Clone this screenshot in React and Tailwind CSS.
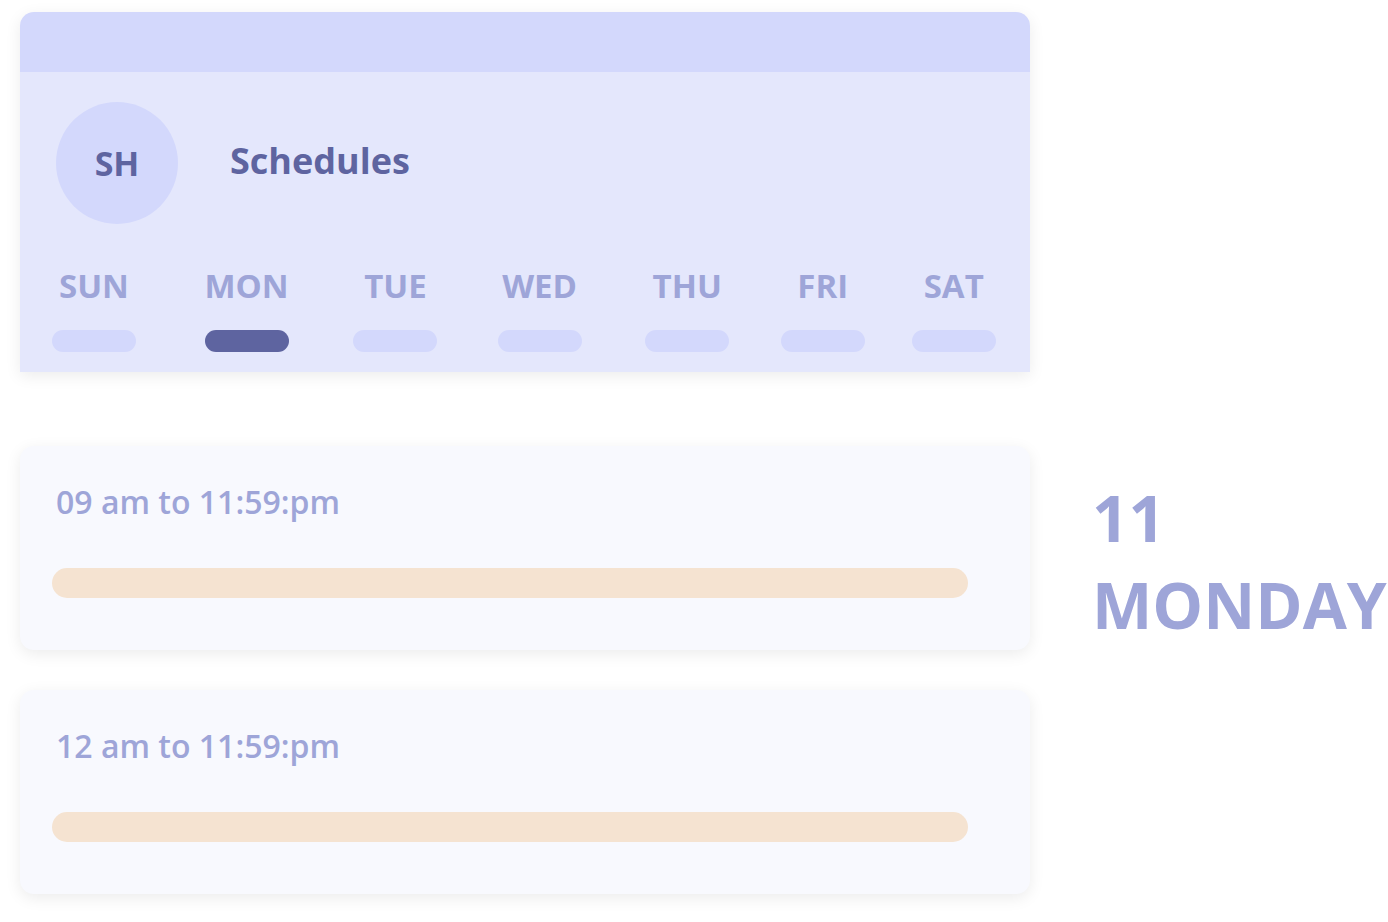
const days = ["SUN", "MON", "TUE", "WED", "THU", "FRI", "SAT"];

const slots = [{ label: "09 am to 11:59:pm" }, { label: "12 am to 11:59:pm" }];

const SlotCard = ({ label }) => (
    <div className="bg-[#f8f9fe] rounded-[14px] shadow-[0_4px_16px_rgba(0,0,0,0.08)] h-[204px] px-[32px] pt-[36px]">
        <p className="text-[32px] leading-[40px] font-semibold text-[#9ea5d8] pl-[4px]">{label}</p>
        <div className="mt-[46px] h-[30px] w-[916px] rounded-full bg-[#f5e3d1]" />
    </div>
);

export default function App() {
    return (
        <div className="min-h-screen bg-white flex gap-[62px] pl-[20px] pt-[12px]" style={{ fontFamily: '"Open Sans", sans-serif' }}>
            <div className="w-[1010px] shrink-0 flex flex-col">
                {/* Schedule header card */}
                <div className="rounded-t-[14px] overflow-hidden shadow-[0_4px_16px_rgba(0,0,0,0.08)]">
                    <div className="h-[60px] bg-[#d3d8fc]" />
                    <div className="bg-[#e4e7fc] pt-[30px] pb-[20px]">
                        <div className="flex items-center pl-[36px] gap-[52px]">
                            <div className="w-[122px] h-[122px] rounded-full bg-[#d3d8fc] flex items-center justify-center">
                                <span className="text-[34px] font-bold text-[#5e64a0]">SH</span>
                            </div>
                            <h1 className="text-[36px] font-bold text-[#5e64a0] -mt-[4px]">Schedules</h1>
                        </div>
                        <div className="flex gap-[75.5px] pl-[39px] mt-[46px]">
                            {days.map((d) => (
                                <div key={d} className="flex flex-col items-center">
                                    <span className="text-[33px] leading-[32px] font-bold text-[#9ea5d8]">{d}</span>
                                    <div className="w-0 flex justify-center mt-[28px]">
                                        <div
                                            className={
                                                d === "MON"
                                                    ? "shrink-0 w-[84px] h-[22px] rounded-full bg-[#5e64a0]"
                                                    : "shrink-0 w-[84px] h-[22px] rounded-full bg-[#d3d8fc]"
                                            }
                                        />
                                    </div>
                                </div>
                            ))}
                        </div>
                    </div>
                </div>

                <div className="mt-[74px] flex flex-col gap-[40px]">
                    {slots.map((s) => (
                        <SlotCard key={s.label} label={s.label} />
                    ))}
                </div>
            </div>

            <div className="pt-[462px] text-[64px] leading-[87px] font-bold text-[#9ea5d8] whitespace-nowrap">
                <div>11</div>
                <div>MONDAY</div>
            </div>
        </div>
    );
}
